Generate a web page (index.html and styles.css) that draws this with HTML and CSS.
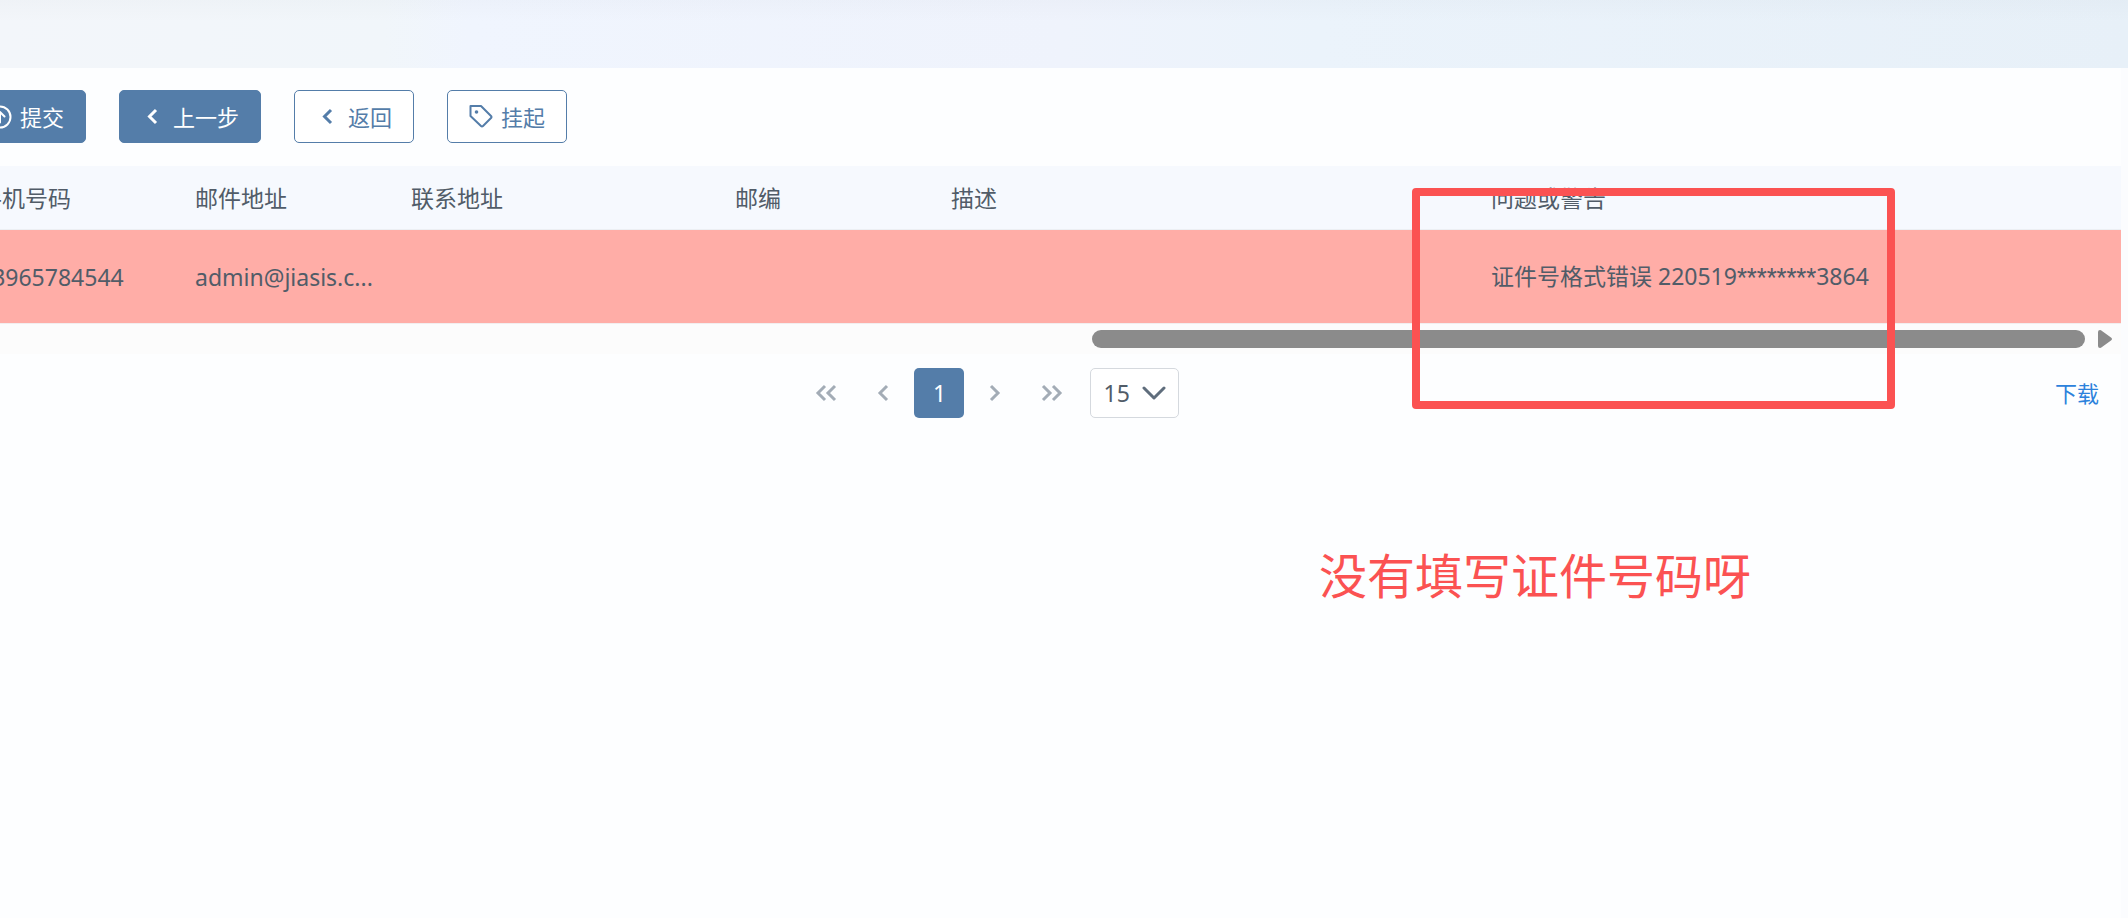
FILE: index.html
```html
<!DOCTYPE html>
<html lang="zh-CN">
<head>
<meta charset="utf-8">
<title>数据校验</title>
<link rel="stylesheet" href="styles.css">
</head>
<body>
<header class="banner"></header>
<main class="panel">
  <div class="toolbar">
    <button class="btn btn-primary" type="button">
      <svg class="icon" viewBox="0 0 24 24"><circle cx="12" cy="12" r="10.5"/><path d="M12 17.5V7M7.5 11.5L12 7l4.5 4.5"/></svg>
      <span>提交</span>
    </button>
    <button class="btn btn-primary" type="button">
      <svg class="icon icon-bold" viewBox="0 0 24 24"><path d="M15 5l-6.500 6.500 6.500 6.500"/></svg>
      <span>上一步</span>
    </button>
    <button class="btn" type="button">
      <svg class="icon icon-bold" viewBox="0 0 24 24"><path d="M15 5l-6.500 6.500 6.500 6.500"/></svg>
      <span>返回</span>
    </button>
    <button class="btn" type="button">
      <svg class="icon" viewBox="0 0 24 24"><path d="M1.500 1H12L22 11Q23 12 22 13L14 21Q13 22 12 21L1.500 11Z"/><circle class="dot" cx="7.500" cy="7" r="1.800"/></svg>
      <span>挂起</span>
    </button>
  </div>

  <div class="table-wrap">
    <table class="grid">
      <colgroup>
        <col class="col-m"><col class="col-m"><col class="col-l"><col class="col-m"><col class="col-xl"><col>
      </colgroup>
      <thead>
        <tr><th>手机号码</th><th>邮件地址</th><th>联系地址</th><th>邮编</th><th>描述</th><th>问题或警告</th></tr>
      </thead>
      <tbody>
        <tr><td>13965784544</td><td>admin@jiasis.c...</td><td></td><td></td><td></td><td>证件号格式错误 220519<span class="mask">********</span>3864</td></tr>
      </tbody>
    </table>
  </div>
  <div class="scrollbar">
    <div class="thumb"></div>
    <svg class="arrow" viewBox="0 0 14 18"><path d="M0 2Q0 0 2 0Q3 0 4 1L13 7.500Q15 9 13 10.500L4 17Q3 18 2 18Q0 18 0 16Z"/></svg>
  </div>

  <div class="footer">
    <nav class="pager" aria-label="分页">
      <button class="page" type="button" aria-label="首页"><svg viewBox="0 0 24 24"><path d="M10 5l-7 7 7 7M20 5l-7 7 7 7"/></svg></button>
      <button class="page" type="button" aria-label="上一页"><svg viewBox="0 0 24 24"><path d="M16 5l-7 7 7 7"/></svg></button>
      <button class="page current" type="button">1</button>
      <button class="page" type="button" aria-label="下一页"><svg viewBox="0 0 24 24"><path d="M8 5l7 7-7 7"/></svg></button>
      <button class="page" type="button" aria-label="末页"><svg viewBox="0 0 24 24"><path d="M4 5l7 7-7 7M14 5l7 7-7 7"/></svg></button>
      <div class="size">
        <select aria-label="每页条数"><option>15</option></select>
        <svg viewBox="0 0 24 24"><path d="M2 7l10 10L22 7"/></svg>
      </div>
    </nav>
    <a class="download" href="#">下载</a>
  </div>
</main>
<div class="mark"></div>
<p class="note">没有填写证件号码呀</p>
</body>
</html>
```
FILE: styles.css
```css
* { box-sizing: border-box; }

body {
  margin: 0;
  min-height: 100vh;
  display: flex;
  flex-direction: column;
  position: relative;
  overflow-x: hidden;
  background: #fdfeff;
  color: #515c68;
  font: 23px/32px "Noto Sans", "Noto Sans CJK SC", sans-serif;
}

button, select { font: inherit; color: inherit; }

svg {
  fill: none;
  stroke: currentColor;
  stroke-width: 2;
  stroke-linejoin: round;
  stroke-linecap: round;
}

.banner {
  height: 68px;
  background:
    linear-gradient(180deg, rgba(40, 50, 70, 0.02), rgba(40, 50, 70, 0) 22px),
    linear-gradient(90deg, #f3f6fa 0%, #f1f6fa 18%, #f0f5fe 22%, #eff3fc 50%, #ebf3fb 62%, #e7f0f8 100%);
}

.panel {
  flex: 1;
  border-right: 7px solid #fbfcfe;
  overflow: hidden;
}

.toolbar {
  display: flex;
  gap: 33px;
  margin-left: -34px;
  padding: 22px 0 23px;
}

.btn {
  display: flex;
  align-items: center;
  gap: 8px;
  height: 53px;
  padding: 0 21px;
  border: 1px solid #547da9;
  border-radius: 5px;
  background: #fff;
  color: #547da9;
  font-size: 22px;
  white-space: nowrap;
}

.btn-primary { background: #547da9; color: #fff; }

.icon { width: 24px; height: 24px; }
.icon-bold { stroke-width: 3; stroke-linecap: butt; stroke-linejoin: miter; }
.dot { fill: currentColor; stroke: none; }

.table-wrap { margin-left: -43px; }

.grid {
  width: 100%;
  table-layout: fixed;
  border-collapse: separate;
  border-spacing: 0;
}

.col-m { width: 216px; }
.col-l { width: 324px; }
.col-xl { width: 540px; }

.grid th, .grid td {
  padding: 0 0 0 22px;
  text-align: left;
  font-weight: 400;
  white-space: nowrap;
}

.grid th { height: 64px; background: #f6f9fe; border-bottom: 1px solid #eceff3; }
.grid td { height: 94px; background: #ffada7; border-bottom: 1px solid #f2eeef; }
.mask { font-family: Roboto, sans-serif; }

.scrollbar {
  display: flex;
  align-items: center;
  justify-content: flex-end;
  gap: 13px;
  height: 30px;
  padding-right: 9px;
  background: #fcfcfc;
}

.thumb { width: 47%; height: 18px; border-radius: 9px; background: #8b8b8b; }
.arrow { width: 14px; height: 18px; fill: #8b8b8b; stroke: none; }

.footer {
  display: flex;
  align-items: center;
  justify-content: space-between;
  margin-left: -117px;
  padding: 14px 22px 14px 0;
}

.footer::before { content: ""; width: 44px; }

.pager { display: flex; gap: 6px; }

.page {
  display: flex;
  align-items: center;
  justify-content: center;
  width: 50px;
  height: 50px;
  padding: 0;
  border: 0;
  border-radius: 5px;
  background: none;
  color: #a3acb6;
}

.page svg { width: 24px; height: 24px; stroke-width: 3; stroke-linecap: butt; stroke-linejoin: miter; }
.page.current { background: #547da9; color: #fff; }

.size { position: relative; margin-left: 8px; }

.size select {
  width: 89px;
  height: 50px;
  padding: 0 12px;
  border: 1px solid #d5d9de;
  border-radius: 5px;
  background: #fff;
  appearance: none;
}

.size svg {
  position: absolute;
  right: 13px;
  top: 13px;
  width: 24px;
  height: 24px;
  stroke: #5f6d7c;
  stroke-width: 3;
  pointer-events: none;
}

.download { color: #2c82dc; font-size: 22px; text-decoration: none; }

/* Review markup drawn over the page */
.mark {
  position: absolute;
  left: 1412px;
  top: 188px;
  width: 483px;
  height: 221px;
  border: 8px solid #fb5252;
  border-radius: 4px;
}

.note {
  position: absolute;
  left: 1319px;
  top: 540px;
  margin: 0;
  color: #fb5252;
  font-size: 48px;
  line-height: 72px;
  white-space: nowrap;
}
```
